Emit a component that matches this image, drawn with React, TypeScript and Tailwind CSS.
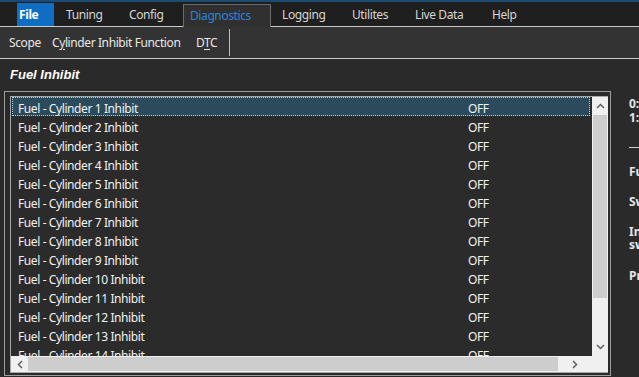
import React from "react";

const rows = Array.from({ length: 16 }, (_, i) => `Fuel - Cylinder ${i + 1} Inhibit`);

function Tab({ label, w, pl, active, file }: { label: string; w: number; pl: number; active?: boolean; file?: boolean }) {
  if (file) {
    return (
      <div className="h-[23px] mt-[1px] bg-[#0f6ec4] text-white font-bold flex items-center" style={{ width: w, paddingLeft: pl }}>
        {label}
      </div>
    );
  }
  if (active) {
    return (
      <div
        className="h-[23px] mt-[2px] bg-[#303030] border border-b-0 border-[#6b6b6b] text-[#2d82d6] flex items-center relative z-10 -mb-[1px]"
        style={{ width: w, paddingLeft: pl }}
      >
        {label}
      </div>
    );
  }
  return (
    <div className="h-[23px] mt-[1px] text-[#d6d6d6] flex items-center" style={{ width: w, paddingLeft: pl }}>
      {label}
    </div>
  );
}

export default function App() {
  return (
    <div
      className="w-[639px] h-[377px] overflow-hidden bg-[#2a2a2a] text-[12px] tracking-[-0.4px] flex flex-col"
      style={{ fontFamily: '"Noto Sans", "Open Sans", sans-serif' }}
    >
      {/* top tab bar */}
      <div className="h-[27px] shrink-0 bg-[#1f1f1f] border-t-2 border-[#1b4a72] border-b border-b-[#c9c9c9] flex items-start pl-[17px]">
        <Tab label="File" w={37} pl={2} file />
        <Tab label="Tuning" w={58} pl={12} />
        <Tab label="Config" w={71} pl={17} />
        <Tab label="Diagnostics" w={88} pl={6} active />
        <Tab label="Logging" w={63} pl={11} />
        <Tab label="Utilites" w={70} pl={18} />
        <Tab label="Live Data" w={68} pl={11} />
        <Tab label="Help" w={63} pl={20} />
      </div>

      {/* toolbar */}
      <div className="h-[32px] shrink-0 bg-[#333333] border-b border-[#c9c9c9] flex items-center text-[#e8e8e8]">
        <div className="pl-[9px] w-[52px]">Scope</div>
        <div className="w-[144px]">
          C<span className="underline underline-offset-2">y</span>linder Inhibit Function
        </div>
        <div className="w-[33px]">
          D<span className="underline underline-offset-2">T</span>C
        </div>
        <div className="w-[1px] h-[27px] bg-[#bdbdbd]" />
      </div>

      {/* title */}
      <div className="h-[32px] shrink-0 flex items-center pl-[10px] tracking-normal">
        <span
          className="text-white font-bold italic text-[13px]"
          style={{ fontFamily: '"Liberation Sans", Arial, sans-serif' }}
        >
          Fuel Inhibit
        </span>
      </div>

      {/* body */}
      <div className="flex flex-1 min-h-0">
        {/* frame */}
        <div className="ml-[4px] w-[607px] h-[285px] border border-[#9d9d9d] pt-[4px] pl-[5px]">
          {/* list box */}
          <div className="w-[598px] h-[277px] border border-[#a8a8a8] bg-[#2b2b2b] grid grid-cols-[581px_16px] grid-rows-[259px_16px]">
            {/* content */}
            <div className="overflow-hidden">
              {rows.map((r, i) => (
                <div
                  key={r}
                  className={
                    "h-[19px] flex items-center pt-[4px] text-[#f2f2f2] " +
                    (i === 0 ? "bg-[#2b4b5c] border border-dotted border-[#a7d3ef] ml-[1px] w-[578px]" : "")
                  }
                >
                  <div className={i === 0 ? "w-[455px] pl-[5px]" : "w-[457px] pl-[7px]"}>{r}</div>
                  <div>OFF</div>
                </div>
              ))}
            </div>
            {/* vertical scrollbar */}
            <div className="bg-[#f0f0f0] flex flex-col">
              <div className="h-[18px] flex items-center justify-center">
                <svg width="9" height="6" viewBox="0 0 9 6">
                  <path d="M1 5 L4.5 1.5 L8 5" stroke="#606060" strokeWidth="1.5" fill="none" />
                </svg>
              </div>
              <div className="h-[183px] mx-[1px] bg-[#cdcdcd]" />
              <div className="flex-1" />
              <div className="h-[18px] flex items-center justify-center">
                <svg width="9" height="6" viewBox="0 0 9 6">
                  <path d="M1 1 L4.5 4.5 L8 1" stroke="#606060" strokeWidth="1.5" fill="none" />
                </svg>
              </div>
            </div>
            {/* horizontal scrollbar */}
            <div className="bg-[#f0f0f0] flex items-center">
              <div className="w-[17px] h-full flex items-center justify-center">
                <svg width="6" height="9" viewBox="0 0 6 9">
                  <path d="M5 1 L1.5 4.5 L5 8" stroke="#606060" strokeWidth="1.5" fill="none" />
                </svg>
              </div>
              <div className="w-[530px] h-[14px] bg-[#cdcdcd]" />
              <div className="flex-1 h-full flex items-center justify-center">
                <svg width="6" height="9" viewBox="0 0 6 9">
                  <path d="M1 1 L4.5 4.5 L1 8" stroke="#606060" strokeWidth="1.5" fill="none" />
                </svg>
              </div>
            </div>
            <div className="bg-[#f0f0f0]" />
          </div>
        </div>

        {/* right panel */}
        <div className="flex-1 overflow-hidden pl-[18px] pt-[6px] text-[#e6e6e6] font-bold whitespace-nowrap tracking-normal">
          <div className="leading-[14px]">0: Off</div>
          <div className="leading-[14px]">1: On</div>
          <div className="mt-[22px] h-[1px] bg-[#d0d0d0] w-[40px]" />
          <div className="mt-[17px] leading-[14px]">Function</div>
          <div className="mt-[16px] leading-[14px]">Switch</div>
          <div className="mt-[16px] leading-[13px]">Inhibit</div>
          <div className="leading-[13px]">switch</div>
          <div className="mt-[18px] leading-[14px]">Press</div>
        </div>
      </div>
    </div>
  );
}
